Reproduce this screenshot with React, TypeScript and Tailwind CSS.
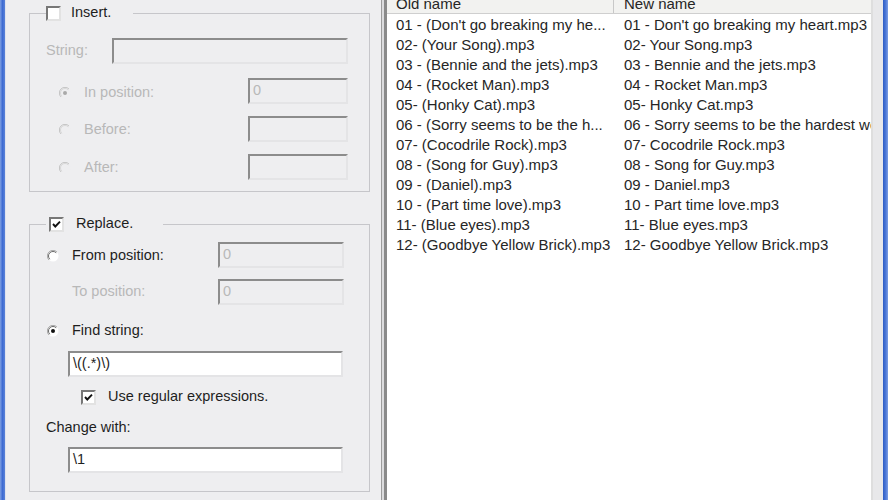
import type { ReactNode } from 'react';

const OLD_NAMES = [
  "01 - (Don't go breaking my he...",
  '02- (Your Song).mp3',
  '03 - (Bennie and the jets).mp3',
  '04 - (Rocket Man).mp3',
  '05- (Honky Cat).mp3',
  '06 - (Sorry seems to be the h...',
  '07- (Cocodrile Rock).mp3',
  '08 - (Song for Guy).mp3',
  '09 - (Daniel).mp3',
  '10 - (Part time love).mp3',
  '11- (Blue eyes).mp3',
  '12- (Goodbye Yellow Brick).mp3',
];

const NEW_NAMES = [
  "01 - Don't go breaking my heart.mp3",
  '02- Your Song.mp3',
  '03 - Bennie and the jets.mp3',
  '04 - Rocket Man.mp3',
  '05- Honky Cat.mp3',
  '06 - Sorry seems to be the hardest word.mp3',
  '07- Cocodrile Rock.mp3',
  '08 - Song for Guy.mp3',
  '09 - Daniel.mp3',
  '10 - Part time love.mp3',
  '11- Blue eyes.mp3',
  '12- Goodbye Yellow Brick.mp3',
];

/**
 * Radio - classic sunken radio button
 */
function Radio({ checked = false, disabled = false }: { checked?: boolean; disabled?: boolean }) {
  return (
    <svg viewBox="0 0 12 12" className="w-[12px] h-[12px] shrink-0">
      <circle cx="6" cy="6" r="5.5" fill={disabled ? '#eeeef0' : '#ffffff'} />
      <path d="M10 2 A5.5 5.5 0 0 0 2 10" fill="none" stroke={disabled ? '#c4c4c4' : '#a8a8a8'} strokeWidth="1" />
      <path d="M9.2 2.8 A4.5 4.5 0 0 0 2.8 9.2" fill="none" stroke={disabled ? '#d8d8d8' : '#6a6a6a'} strokeWidth="1" />
      {checked && <circle cx="6" cy="6" r="2" fill={disabled ? '#a9a9a9' : '#111111'} />}
    </svg>
  );
}

/**
 * Check - classic sunken checkbox
 */
function Check({ checked = false }: { checked?: boolean }) {
  return (
    <span className="flex items-center justify-center w-[15px] h-[15px] shrink-0 bg-white border-2 border-t-[#777] border-l-[#777] border-r-[#e2e2e2] border-b-[#e2e2e2]">
      {checked && (
        <svg viewBox="0 0 11 11" className="w-[11px] h-[11px]">
          <path d="M2 5 L4.3 7.5 L9 2.6" fill="none" stroke="#111" strokeWidth="1.9" />
        </svg>
      )}
    </span>
  );
}

function Field({ value = '', disabled = false, className = '' }: { value?: string; disabled?: boolean; className?: string }) {
  return (
    <div
      className={`flex items-center h-[26px] pl-[3px] border-2 border-t-[#8c8c8c] border-l-[#8c8c8c] border-r-[#e4e4e6] border-b-[#e4e4e6] ${
        disabled ? 'bg-[#eeeef0] text-[#b8b8b8]' : 'bg-white text-[#1e1e1e]'
      } ${className}`}
    >
      {value}
    </div>
  );
}

function GroupBox({ legend, children, className = '' }: { legend: ReactNode; children: ReactNode; className?: string }) {
  return (
    <fieldset className={`w-[341px] border border-[#c6c6ca] ${className}`}>
      <legend className="h-[20px]">{legend}</legend>
      {children}
    </fieldset>
  );
}

export default function App() {
  return (
    <div className="flex w-[888px] h-[500px] overflow-hidden bg-[#eeeef0] text-[14.5px] text-[#1e1e1e] font-['Liberation_Sans',Arial,sans-serif]">
      {/* Left window frame */}
      <div className="w-[5px] shrink-0 bg-gradient-to-r from-[#7f9fe2] via-[#3e6bd2] to-[#5a82d8]" />

      {/* Options panel */}
      <div className="w-[376px] shrink-0 pl-[23px] pt-[3px] border-l border-[#dfe3ee]">
        <GroupBox
          className="pl-[16px] pr-[21px] pb-[11px]"
          legend={
            <span className="flex items-center h-[20px] gap-[10px] pl-[0px] pr-[22px]">
              <Check />
              <span>Insert.</span>
            </span>
          }
        >
          <div className="flex items-center mt-[15px]">
            <span className="text-[#b8b8b8]">String:</span>
            <Field disabled className="ml-auto w-[236px]" />
          </div>
          <div className="flex items-center mt-[14px]">
            <span className="flex items-center gap-[13px] pl-[13px] pt-[3px] text-[#b8b8b8]">
              <Radio checked disabled />
              In position:
            </span>
            <Field disabled value="0" className="ml-auto w-[100px]" />
          </div>
          <div className="flex items-center mt-[12px]">
            <span className="flex items-center gap-[13px] pl-[13px] pt-[2px] text-[#b8b8b8]">
              <Radio disabled />
              Before:
            </span>
            <Field disabled className="ml-auto w-[100px]" />
          </div>
          <div className="flex items-center mt-[12px]">
            <span className="flex items-center gap-[13px] pl-[13px] pt-[2px] text-[#b8b8b8]">
              <Radio disabled />
              After:
            </span>
            <Field disabled className="ml-auto w-[100px]" />
          </div>
        </GroupBox>

        <GroupBox
          className="mt-[22px] pl-[16px] pr-[25px] pb-[18px]"
          legend={
            <span className="flex items-center h-[20px] gap-[12px] pl-[3px] pr-[30px]">
              <Check checked />
              <span>Replace.</span>
            </span>
          }
        >
          <div className="flex items-end mt-[8px]">
            <span className="flex items-center gap-[13px] pl-[1px] pb-[1px]">
              <Radio />
              From position:
            </span>
            <Field disabled value="0" className="ml-auto w-[126px]" />
          </div>
          <div className="flex items-center mt-[11px]">
            <span className="pl-[26px] text-[#b8b8b8]">To position:</span>
            <Field disabled value="0" className="ml-auto w-[126px]" />
          </div>
          <div className="flex items-center h-[18px] mt-[17px]">
            <span className="flex items-center gap-[13px] pl-[1px]">
              <Radio checked />
              Find string:
            </span>
          </div>
          <Field value="\((.*)\)" className="mt-[11px] ml-[22px] w-[275px]" />
          <div className="flex items-center gap-[12px] h-[16px] mt-[12px] pl-[35px]">
            <Check checked />
            <span>Use regular expressions.</span>
          </div>
          <div className="flex items-center h-[18px] mt-[14px]">Change with:</div>
          <Field value="\1" className="mt-[10px] ml-[22px] w-[275px]" />
        </GroupBox>
      </div>

      {/* File list */}
      <div className="flex shrink-0 border-l border-[#9c9c9c]">
        <div className="w-[2px] bg-[#dcdcde]" />
        <div className="w-[3px] bg-[#8a8a8a]" />
        <div className="w-[484px] bg-white overflow-hidden text-[15px] text-[#262626]">
          <div className="flex h-[14px] bg-[#f2f2f0] border-b border-[#cfcfcf] overflow-hidden whitespace-nowrap">
            <div className="w-[227px] shrink-0 pl-[9px] -mt-[4px] leading-[15px] border-r border-[#c8c8c8]">Old name</div>
            <div className="pl-[10px] -mt-[4px] leading-[15px]">New name</div>
          </div>
          <ul className="m-0 p-0 pt-[1px] list-none">
            {OLD_NAMES.map((name, i) => (
              <li key={name} className="flex h-[20px] leading-[20px] whitespace-nowrap">
                <span className="w-[227px] shrink-0 pl-[9px] overflow-hidden">{name}</span>
                <span className="pl-[10px]">{NEW_NAMES[i]}</span>
              </li>
            ))}
          </ul>
        </div>
        <div className="w-[2px] bg-[#dedede]" />
      </div>

      {/* Right margin and frame */}
      <div className="w-[10px] shrink-0 bg-[#e8e8ea]" />
      <div className="w-[5px] shrink-0 bg-gradient-to-r from-[#2d5cc4] via-[#4a76d6] to-[#7c9de2]" />
    </div>
  );
}
